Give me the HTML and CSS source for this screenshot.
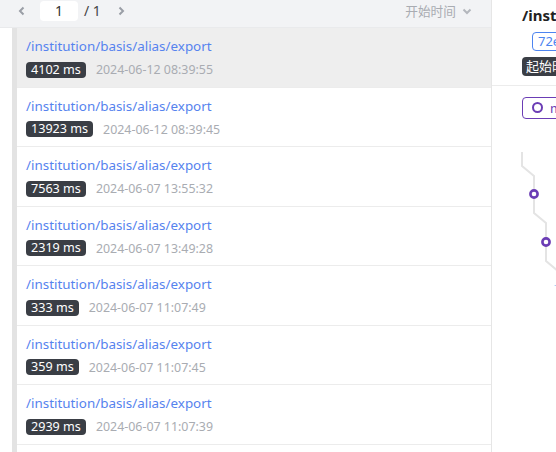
FILE: index.html
```html
<!DOCTYPE html>
<html>
<head>
<meta charset="utf-8">
<link rel="stylesheet" href="styles.css">
</head>
<body>
<div class="app">
  <div class="left">
    <div class="toolbar">
      <span class="pg-btn"><svg width="10" height="10" viewBox="0 0 10 10"><polyline points="6.5,1.5 3,5 6.5,8.5" fill="none" stroke="#9a9ea6" stroke-width="2"/></svg></span>
      <span class="pg-input">1</span>
      <span class="pg-total">/ 1</span>
      <span class="pg-btn next"><svg width="10" height="10" viewBox="0 0 10 10"><polyline points="3.5,1.5 7,5 3.5,8.5" fill="none" stroke="#9a9ea6" stroke-width="2"/></svg></span>
      <span class="sort">开始时间<svg width="10" height="10" viewBox="0 0 10 10"><polyline points="1.5,3.5 5,7 8.5,3.5" fill="none" stroke="#b4b7bd" stroke-width="2"/></svg></span>
    </div>
    <div class="list">
      <div class="item active">
        <div class="path">/institution/basis/alias/export</div>
        <div class="meta"><span class="badge">4102 ms</span><span class="time">2024-06-12 08:39:55</span></div>
      </div>
      <div class="item">
        <div class="path">/institution/basis/alias/export</div>
        <div class="meta"><span class="badge">13923 ms</span><span class="time">2024-06-12 08:39:45</span></div>
      </div>
      <div class="item">
        <div class="path">/institution/basis/alias/export</div>
        <div class="meta"><span class="badge">7563 ms</span><span class="time">2024-06-07 13:55:32</span></div>
      </div>
      <div class="item">
        <div class="path">/institution/basis/alias/export</div>
        <div class="meta"><span class="badge">2319 ms</span><span class="time">2024-06-07 13:49:28</span></div>
      </div>
      <div class="item">
        <div class="path">/institution/basis/alias/export</div>
        <div class="meta"><span class="badge">333 ms</span><span class="time">2024-06-07 11:07:49</span></div>
      </div>
      <div class="item">
        <div class="path">/institution/basis/alias/export</div>
        <div class="meta"><span class="badge">359 ms</span><span class="time">2024-06-07 11:07:45</span></div>
      </div>
      <div class="item">
        <div class="path">/institution/basis/alias/export</div>
        <div class="meta"><span class="badge">2939 ms</span><span class="time">2024-06-07 11:07:39</span></div>
      </div>
    </div>
  </div>
  <div class="right">
    <div class="detail-head">
      <div class="title">/institution/basis/alias/export</div>
      <div class="tagline"><span class="tag">72e4b1c9a0d3</span></div>
      <div class="startline"><span class="badge dark">起始时间 2024-06-12 08:39:55</span></div>
    </div>
    <div class="detail-body">
      <span class="mode-btn"><span class="ring"></span>mysql</span>
      <svg class="trace" width="64" height="200" viewBox="0 0 64 200">
        <polyline points="30,66 30,80 42,90 42,127 54,137 54,175 66,185" fill="none" stroke="#e4e4e4" stroke-width="2"/>
        <circle cx="42" cy="108" r="3.6" fill="#fff" stroke="#6b3db5" stroke-width="2.6"/>
        <circle cx="54" cy="156" r="3.6" fill="#fff" stroke="#6b3db5" stroke-width="2.6"/>
        <circle cx="64" cy="204" r="4.5" fill="#3b7ddd"/>
      </svg>
    </div>
  </div>
</div>
</body>
</html>
```
FILE: styles.css
```css
* { box-sizing: border-box; }
html, body { margin: 0; padding: 0; background: #fff; }
body {
  font-family: "Noto Sans", "Noto Sans CJK SC", sans-serif;
  width: 556px;
  height: 452px;
  overflow: hidden;
}
.app {
  display: flex;
  height: 452px;
}
.left {
  width: 492px;
  flex: none;
  border-right: 1px solid #e6e6e6;
  display: flex;
  flex-direction: column;
}
.toolbar {
  height: 28px;
  flex: none;
  background: #f2f3f5;
  border-bottom: 1px solid #e9eaec;
  display: flex;
  align-items: flex-start;
  padding: 1px 0 0 17px;
  color: #555;
}
.pg-btn {
  width: 10px;
  height: 20px;
  display: flex;
  align-items: center;
}
.pg-btn.next { margin-left: 15px; }
.pg-input {
  margin-left: 13px;
  width: 38px;
  height: 20px;
  background: #fff;
  border-radius: 4px;
  text-align: center;
  font-size: 14px;
  line-height: 20px;
  color: #333;
}
.pg-total {
  margin-left: 6px;
  font-size: 14px;
  line-height: 20px;
  color: #444;
}
.sort {
  margin-left: auto;
  margin-right: 19px;
  font-size: 12.7px;
  line-height: 20px;
  color: #a9acb2;
  display: flex;
  align-items: center;
  gap: 6px;
}
.list {
  margin-left: 12px;
  border-left: 5px solid #e3e3e3;
  flex: 1;
  overflow: hidden;
}
.item {
  padding: 8px 10px 8.5px 9px;
  border-bottom: 1px solid #ececec;
}
.item.active { background: #eeeeee; }
.path {
  font-size: 13.4px;
  line-height: 20px;
  color: #5683ee;
}
.meta {
  margin-top: 5px;
  display: flex;
  align-items: center;
  height: 17px;
}
.badge {
  background: #3a3e45;
  color: #fff;
  font-size: 12.6px;
  line-height: 16px;
  height: 16px;
  padding: 0 5px;
  border-radius: 4px;
  white-space: nowrap;
}
.time {
  margin-left: 10px;
  font-size: 12.4px;
  color: #a9acb2;
}
.right {
  flex: 1;
  min-width: 0;
  overflow: hidden;
  display: flex;
  flex-direction: column;
}
.detail-head {
  height: 86px;
  flex: none;
  border-bottom: 1px solid #ececec;
  padding: 5px 0 0 30px;
  white-space: nowrap;
}
.title {
  font-size: 15px;
  font-weight: bold;
  line-height: 20px;
  color: #222;
}
.tagline {
  margin-top: 4px;
  margin-left: 10px;
  height: 19px;
}
.tag {
  display: inline-block;
  height: 19px;
  border: 1px solid #4d84f0;
  border-radius: 4px;
  color: #4d84f0;
  font-size: 13px;
  line-height: 17px;
  padding: 0 5px;
}
.startline {
  margin-top: 6px;
}
.badge.dark {
  display: inline-block;
  font-size: 13px;
  height: 19px;
  line-height: 19px;
  padding: 0 4px;
}
.detail-body {
  position: relative;
  padding: 10px 0 0 30px;
  white-space: nowrap;
}
.mode-btn {
  display: inline-flex;
  align-items: center;
  height: 22px;
  border: 1.5px solid #6b3db5;
  border-radius: 4px;
  padding: 0 8px 0 9px;
  color: #6b3db5;
  font-size: 13px;
  gap: 7px;
}
.ring {
  width: 11px;
  height: 11px;
  border: 2px solid #6b3db5;
  border-radius: 50%;
  display: inline-block;
}
.trace {
  position: absolute;
  left: 0;
  top: 0;
}
```
